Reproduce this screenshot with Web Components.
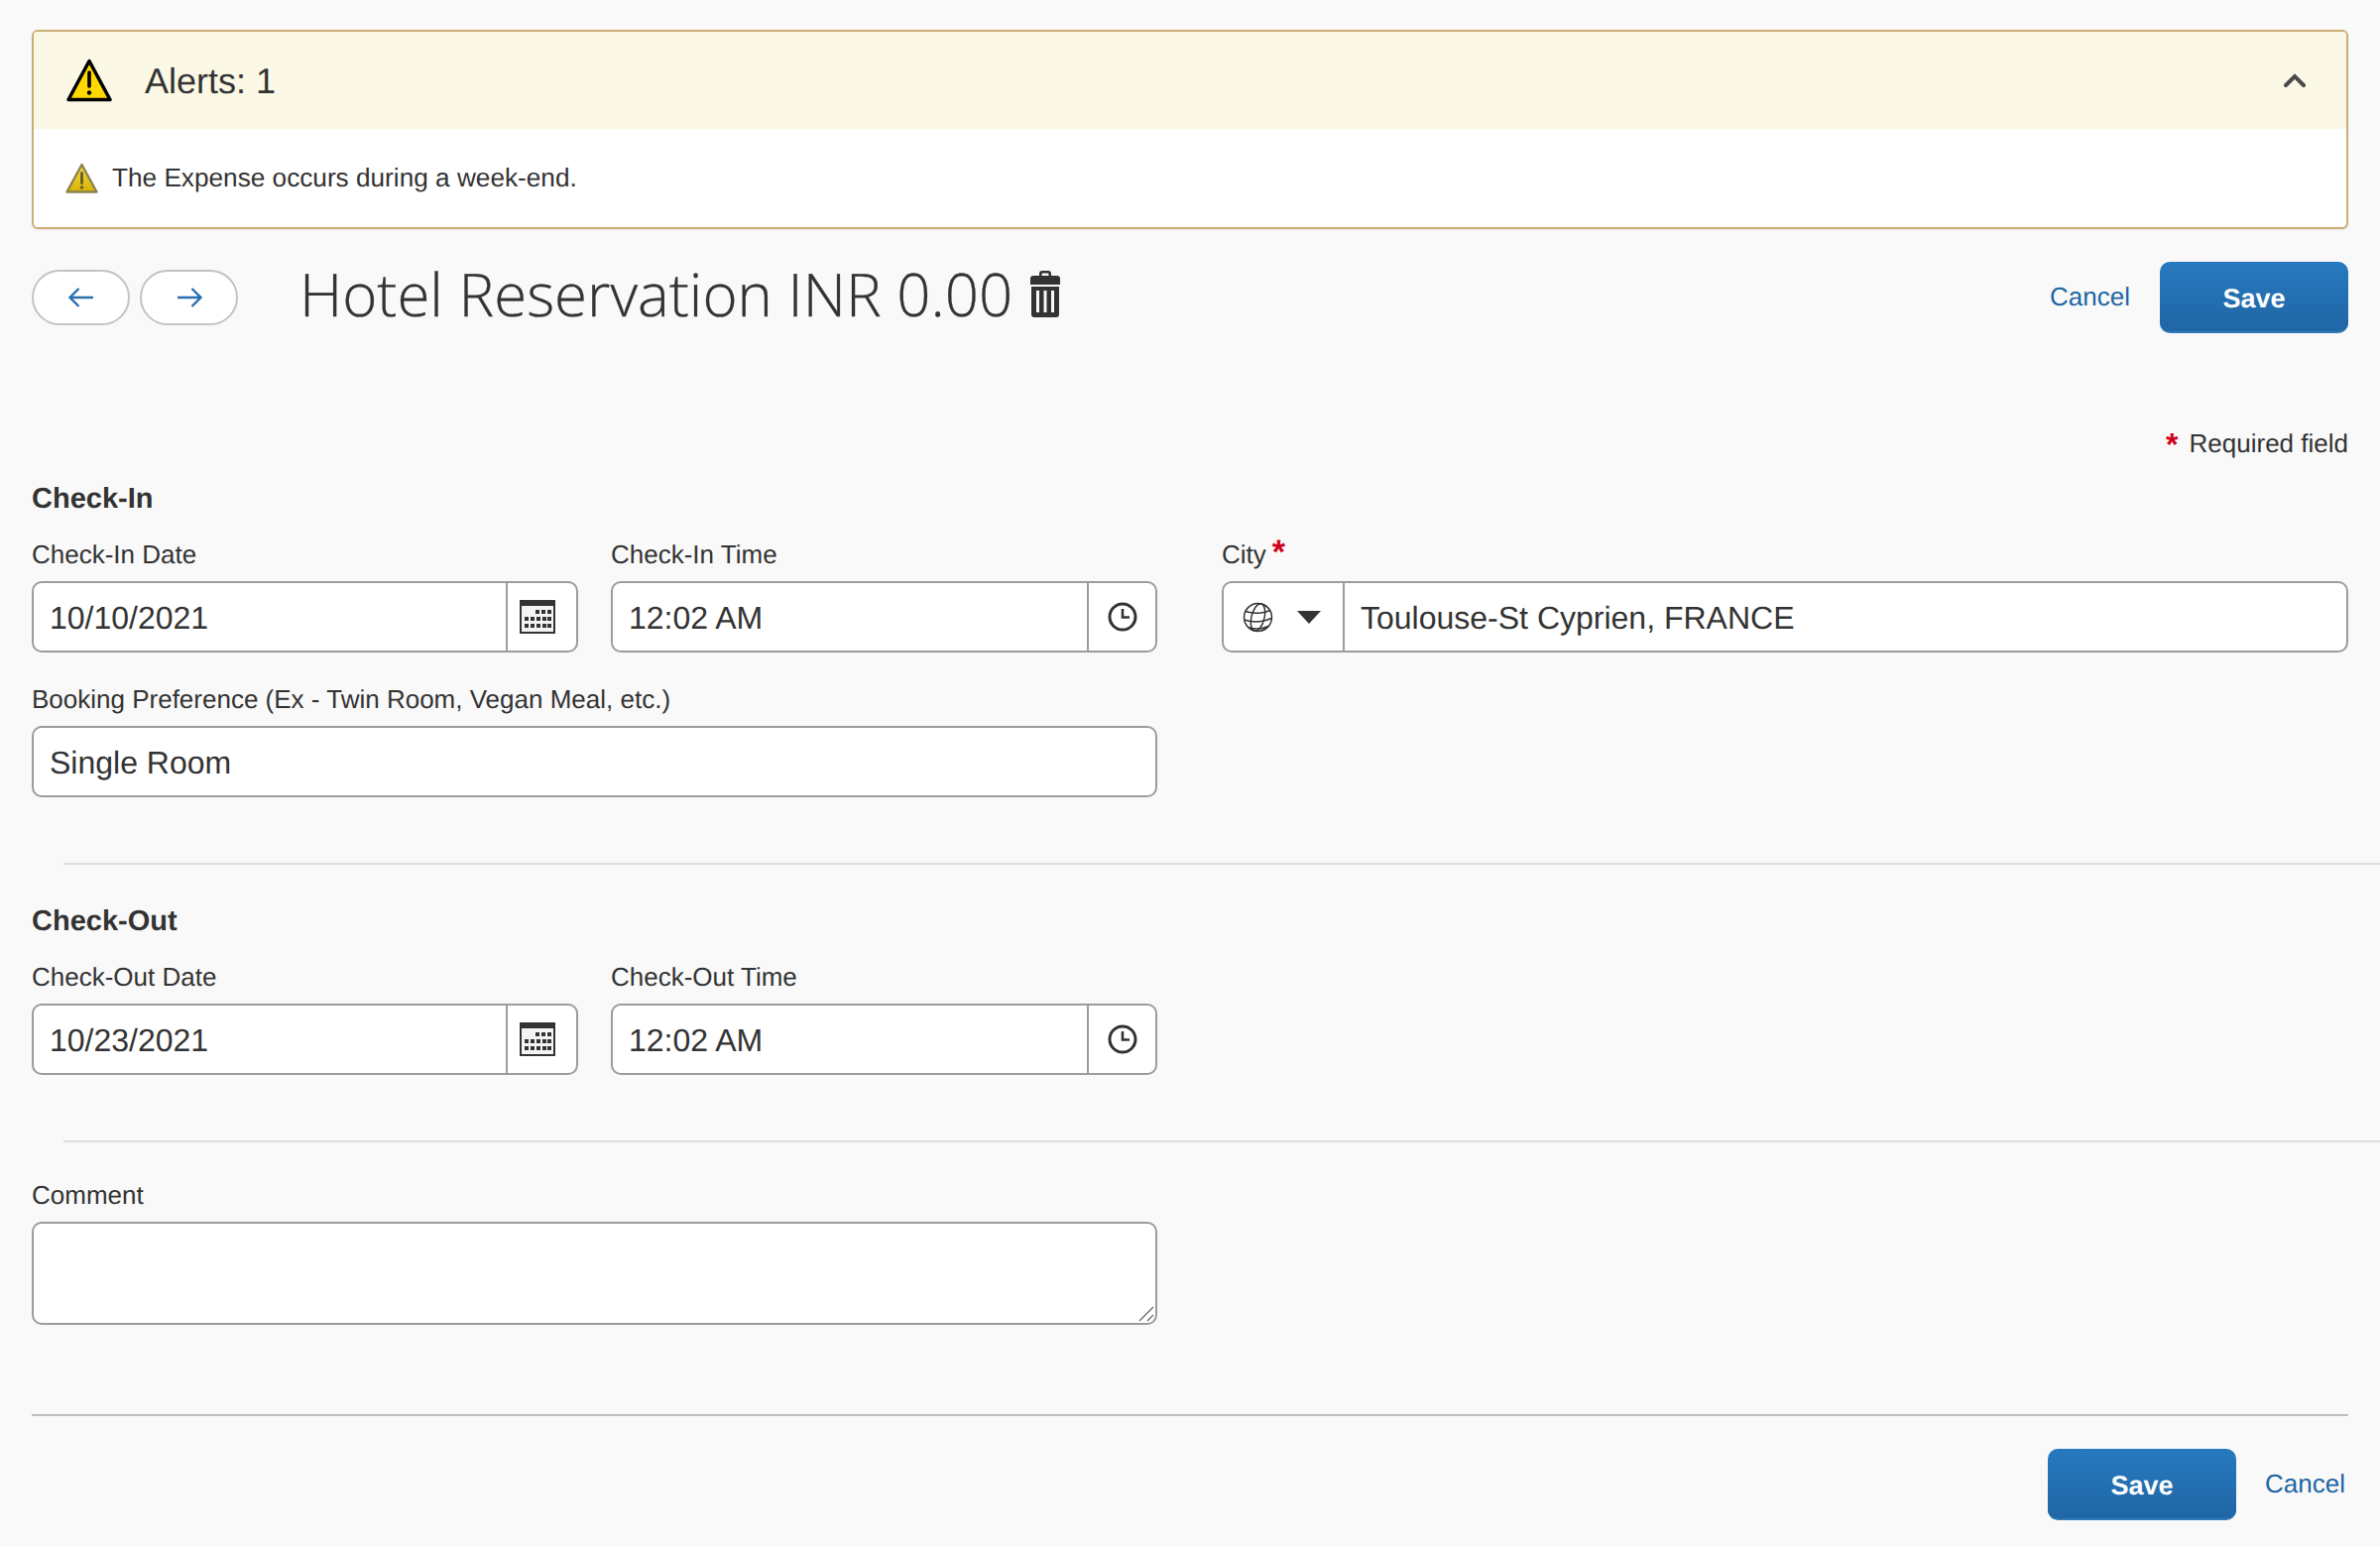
<!DOCTYPE html>
<html>
<head>
<meta charset="utf-8">
<style>
  html, body { margin: 0; background: #f9f9f9; }
  body { font: 26px/1.2 "Liberation Sans", Arial, sans-serif; color: #333; text-rendering: geometricPrecision; }
</style>
</head>
<body>
<expense-page></expense-page>

<script>
/* icons used by more than one element */
const ICONS = {
  calendar: `<svg width="36" height="34" viewBox="0 0 36 34"><rect x="1" y="1" width="34" height="32" fill="#f4f4f4" stroke="#333" stroke-width="2"/><rect x="0" y="0" width="36" height="6" fill="#333"/>
    <g fill="#333"><rect x="16" y="10" width="4" height="4"/><rect x="22" y="10" width="4" height="4"/><rect x="28" y="10" width="4" height="4"/>
    <rect x="5" y="17" width="4" height="4"/><rect x="11" y="17" width="4" height="4"/><rect x="17" y="17" width="4" height="4"/><rect x="23" y="17" width="4" height="4"/><rect x="28" y="17" width="4" height="4"/>
    <rect x="5" y="24" width="4" height="4"/><rect x="11" y="24" width="4" height="4"/><rect x="17" y="24" width="4" height="4"/><rect x="23" y="24" width="4" height="4"/><rect x="28" y="24" width="4" height="4"/></g></svg>`,
  clock: `<svg width="30" height="30" viewBox="0 0 30 30" fill="none" stroke="#333" stroke-width="3"><circle cx="15" cy="15" r="13"/><path d="M15 7v8.500h7" stroke-width="2.600"/></svg>`,
  globe: `<svg width="31" height="31" viewBox="0 0 31 31" fill="none" stroke="#333" stroke-width="1.500"><circle cx="15.500" cy="15.500" r="14"/><ellipse cx="15.500" cy="15.500" rx="6.500" ry="14" transform="rotate(14 15.500 15.500)"/><path d="M3 9.500c7 2.500 17 2.500 25-1M1.800 18c8 2.800 19 2.600 27.400-1.500M6 26c6 1.500 14 1.200 20-1.500"/></svg>`
};

/* alert panel: header + slotted messages */
class AlertPanel extends HTMLElement {
  connectedCallback() {
    this.attachShadow({ mode: 'open' }).innerHTML = `<style>
      :host { display: block; box-sizing: border-box; height: 201px; background: #fff; border: 2px solid #cdae74; border-radius: 6px; overflow: hidden; box-shadow: 0 1px 2px rgba(0,0,0,.08); }
      .head { display: flex; align-items: center; height: 98px; box-sizing: border-box; padding: 0 41px 0 33px; background: #fbf8e5; font-size: 36px; }
      .head svg { display: block; }
      .title { margin-left: 33px; padding-top: 2px; flex: 1; }
      .body { display: flex; align-items: center; height: 99px; padding-left: 32px; box-sizing: border-box; }
      .body span { margin-left: 14px; font-size: 26.200px; }
    </style>
    <div class="head">
      <svg width="46" height="44" viewBox="0 0 46 44"><path d="M23 2.500 44 41.500H2Z" fill="#ffd800" stroke="#000" stroke-width="3.500" stroke-linejoin="round"/><path d="M23 14v14" stroke="#000" stroke-width="3.600" stroke-linecap="round"/><circle cx="23" cy="34.500" r="2.200"/></svg>
      <div class="title">${this.getAttribute('heading')}</div>
      <svg width="22" height="14" viewBox="0 0 22 14" fill="none" stroke="#4a4a4c" stroke-width="4" stroke-linecap="round"><path d="M2 12 11 3l9 9"/></svg>
    </div>
    <div class="body">
      <svg width="33" height="31" viewBox="0 0 33 31"><defs><linearGradient id="w" x1="0" y1="0" x2="0" y2="1"><stop offset="0" stop-color="#f5d84a"/><stop offset="1" stop-color="#d8b300"/></linearGradient></defs><path d="M16.500 2 31.500 29.500H1.500Z" fill="url(#w)" stroke="#8a8350" stroke-width="2.400" stroke-linejoin="round"/><path d="M16.500 10.500v10" stroke="#6b6230" stroke-width="3" stroke-linecap="round"/><circle cx="16.500" cy="25" r="1.800" fill="#6b6230"/></svg>
      <span><slot></slot></span>
    </div>`;
  }
}
customElements.define('alert-panel', AlertPanel);

/* blue primary button */
class SaveButton extends HTMLElement {
  connectedCallback() {
    this.attachShadow({ mode: 'open' }).innerHTML = `<style>
      :host { display: flex; align-items: center; justify-content: center; box-sizing: border-box; width: 190px; height: 72px; padding-top: 4px; border-radius: 10px; color: #fff; font-weight: 700; font-size: 27px;
        background: linear-gradient(#2779bf, #1f66a5); border-bottom: 2px solid #3179b8; }
    </style><slot></slot>`;
  }
}
customElements.define('save-button', SaveButton);

/* plain text link */
class TextLink extends HTMLElement {
  connectedCallback() {
    this.attachShadow({ mode: 'open' }).innerHTML = `<style>:host { display: block; color: #1d65a4; font-size: 26px; }</style><slot></slot>`;
  }
}
customElements.define('text-link', TextLink);

/* pill shaped prev / next button */
class NavPill extends HTMLElement {
  connectedCallback() {
    const d = this.getAttribute('dir') === 'prev' ? 'M26 12H3M11.500 3 2.500 12l9 9' : 'M2 12h23M16.500 3l9 9-9 9';
    this.attachShadow({ mode: 'open' }).innerHTML = `<style>
      :host { display: flex; align-items: center; justify-content: center; box-sizing: border-box; width: 99px; height: 56px; border: 2px solid #c3c3c3; border-radius: 28px; background: #fff; }
    </style><svg width="28" height="24" viewBox="0 0 28 24" fill="none" stroke="#2a6fb0" stroke-width="2.400"><path d="${d}"/></svg>`;
  }
}
customElements.define('nav-pill', NavPill);

/* labelled input: optional left addon (city) and right addon (icon) */
class FormField extends HTMLElement {
  connectedCallback() {
    const icon = this.getAttribute('icon');
    const city = this.hasAttribute('city');
    const req = this.hasAttribute('required');
    this.attachShadow({ mode: 'open' }).innerHTML = `<style>
      :host { display: block; }
      label { display: block; height: 32px; margin-bottom: 11px; line-height: 32px; font-size: 26px; }
      .star { color: #d0021b; font-size: 34px; line-height: 20px; margin-left: 6px; font-weight: 700; }
      .box { display: flex; height: 72px; box-sizing: border-box; background: #fff; border: 2px solid #9b9ba0; border-radius: 10px; font-size: 32px; overflow: hidden; }
      .val { flex: 1; padding-left: 16px; line-height: 71px; }
      .addon { display: flex; align-items: center; justify-content: center; box-sizing: border-box; width: 71px; padding-right: 10px; border-left: 2px solid #9b9ba0; }
      .addon.clock { width: 69px; padding-right: 0; }
      .city { display: flex; align-items: center; box-sizing: border-box; width: 122px; padding-left: 19px; border-right: 2px solid #9b9ba0; }
      .caret { width: 0; height: 0; margin-left: 24px; border: 12px solid transparent; border-top: 13px solid #333; border-bottom: 0; }
    </style>
    <label>${this.getAttribute('label')}${req ? '<span class="star">*</span>' : ''}</label>
    <div class="box">
      ${city ? `<div class="city">${ICONS.globe}<span class="caret"></span></div>` : ''}
      <div class="val"><slot></slot></div>
      ${icon ? `<div class="addon ${icon}">${ICONS[icon]}</div>` : ''}
    </div>`;
  }
}
customElements.define('form-field', FormField);

/* textarea look-alike with a resize grip */
class CommentField extends HTMLElement {
  connectedCallback() {
    this.attachShadow({ mode: 'open' }).innerHTML = `<style>
      :host { display: block; }
      label { display: block; height: 32px; margin-bottom: 11px; line-height: 32px; }
      .box { position: relative; height: 104px; box-sizing: border-box; background: #fff; border: 2px solid #9b9ba0; border-radius: 10px; }
      svg { position: absolute; right: 1px; bottom: 1px; }
    </style>
    <label>${this.getAttribute('label')}</label>
    <div class="box"><svg width="16" height="16" viewBox="0 0 16 16" stroke="#666" stroke-width="1.300"><path d="M1 15 15 1M9 15l6-6"/></svg></div>`;
  }
}
customElements.define('comment-field', CommentField);

/* whole page */
class ExpensePage extends HTMLElement {
  connectedCallback() {
    this.attachShadow({ mode: 'open' }).innerHTML = `<style>
      :host { display: block; box-sizing: border-box; height: 1560px; padding: 30px 32px 0; }
      .top { display: flex; align-items: flex-start; margin-top: 33px; height: 72px; }
      .navs { display: flex; gap: 10px; margin-top: 8px; }
      h1 { margin: 0 0 0 62px; font: 300 60px/64px "Open Sans", sans-serif; color: #333; -webkit-text-stroke: .3px #333; }
      .trash { margin: 8px 0 0 18px; }
      .spacer { flex: 1; }
      .top text-link { margin: 20px 30px 0 0; }
      .req { text-align: right; margin-top: 95px; line-height: 32px; font-size: 26px; }
      .req span { color: #d0021b; margin-right: 4px; font-size: 32px; line-height: 20px; font-weight: 700; vertical-align: -3px; }
      h2 { margin: 24px 0 0; font-size: 29px; line-height: 32px; font-weight: 700; color: #333; }
      .row { display: flex; gap: 33px; margin-top: 24px; }
      .row form-field { width: 551px; flex: none; }
      .row form-field.city { flex: 1; width: auto; margin-left: 32px; }
      .wide { width: 1135px; margin-top: 31px; }
      hr { height: 2px; margin: 0 -32px 0 32px; border: 0; background: #dedede; }
      .out { margin-top: 66px; }
      .foot { height: 2px; background: #bfbfbf; margin-top: 90px; }
      .bottom { display: flex; align-items: center; justify-content: flex-end; gap: 29px; margin-top: 33px; padding-right: 3px; }
    </style>
    <alert-panel heading="Alerts: 1">The Expense occurs during a week-end.</alert-panel>

    <div class="top">
      <div class="navs"><nav-pill dir="prev"></nav-pill><nav-pill dir="next"></nav-pill></div>
      <h1>Hotel Reservation INR 0.00</h1>
      <svg class="trash" width="30" height="48" viewBox="0 0 30 48" fill="#333"><path d="M9 7V4q0-3 3-3h6q3 0 3 3v3h-2.500V4.500q0-1-1-1h-5q-1 0-1 1V7z"/><path d="M3 6h24q3 0 3 3v6H0V9q0-3 3-3z"/><path fill-rule="evenodd" d="M1 17h28v28q0 3-3 3H4q-3 0-3-3zM6 21v22h3V21zM13.500 21v22h3V21zM21 21v22h3V21z"/></svg>
      <div class="spacer"></div>
      <text-link>Cancel</text-link>
      <save-button>Save</save-button>
    </div>

    <div class="req"><span>*</span> Required field</div>

    <h2>Check-In</h2>
    <div class="row">
      <form-field label="Check-In Date" icon="calendar">10/10/2021</form-field>
      <form-field label="Check-In Time" icon="clock">12:02 AM</form-field>
      <form-field class="city" label="City" city required>Toulouse-St Cyprien, FRANCE</form-field>
    </div>
    <form-field class="wide" label="Booking Preference (Ex - Twin Room, Vegan Meal, etc.)">Single Room</form-field>

    <hr class="out">
    <h2 style="margin-top:41px">Check-Out</h2>
    <div class="row">
      <form-field label="Check-Out Date" icon="calendar">10/23/2021</form-field>
      <form-field label="Check-Out Time" icon="clock">12:02 AM</form-field>
    </div>

    <hr style="margin-top:66px">
    <comment-field class="wide" style="margin-top:37px" label="Comment"></comment-field>

    <div class="foot"></div>
    <div class="bottom"><save-button>Save</save-button><text-link>Cancel</text-link></div>`;
  }
}
customElements.define('expense-page', ExpensePage);
</script>
</body>
</html>
